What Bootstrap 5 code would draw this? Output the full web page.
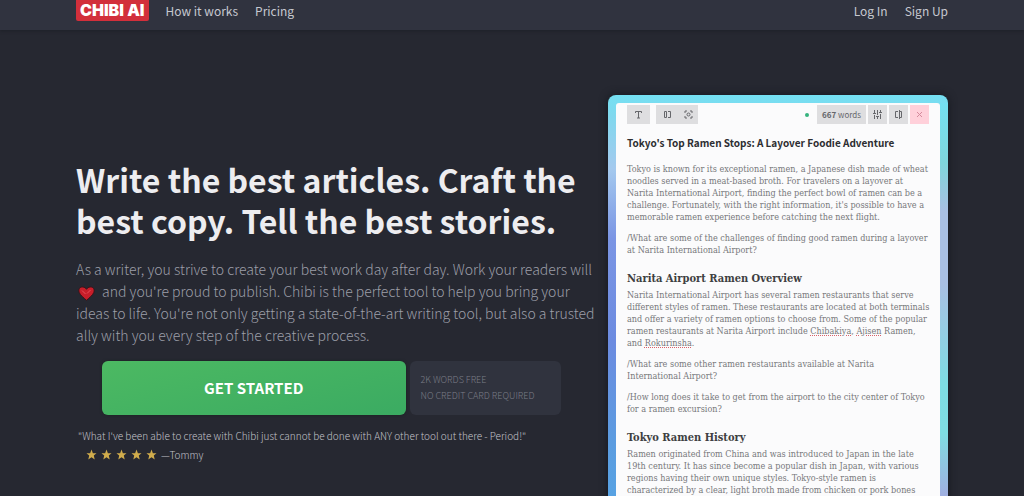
<!DOCTYPE html>
<html lang="en">
<head>
<meta charset="utf-8">
<meta name="viewport" content="width=device-width, initial-scale=1">
<title>Chibi AI</title>
<link href="https://cdn.jsdelivr.net/npm/bootstrap@5.3.0/dist/css/bootstrap.min.css" rel="stylesheet">
<style>
body { background: #262831; color: #9c9ea8; font-family: "Noto Sans CJK JP", "Open Sans", sans-serif; }
.site-width { max-width: 872px; }
.topbar { background: #30333f; height: 30px; box-shadow: 0 1px 3px #1e2028; }
.topbar nav { gap: 17px; }
.topbar a { color: #c6c8d0; font-size: 12px; line-height: 22px; text-decoration: none; }
.topbar a.logo { background: #d22f3b; color: #fff; font: 900 16px/21px Inter, sans-serif; padding: 0 4px; border-radius: 0 0 2px 2px; }
.pitch { flex: 1 1 0; min-width: 0; padding-top: 129px; }
.pitch h1 { color: #ededf0; font-size: 32px; line-height: 41px; font-weight: 700; margin-bottom: 17px; white-space: nowrap; }
.pitch .intro { font-size: 14px; line-height: 22px; font-weight: 300; margin-bottom: 15px; white-space: nowrap; }
.heart { width: 17px; height: 15px; margin: 0 4px 0 2px; }
.offer { margin-left: 26px; margin-right: 23px; }
.cta { flex: 1 1 0; height: 54px; border: 0; border-radius: 6px; color: #fff; background: linear-gradient(165deg, #4cb962, #3bab62); font-size: 15px; font-weight: 700; box-shadow: 0 0 3px #1b2420; }
.terms { flex: 0 0 33%; background: #30333e; color: #7b7d87; border-radius: 6px; font-size: 9px; line-height: 16px; font-weight: 300; padding: 0 11px; white-space: nowrap; }
.quote { color: #c0c1c8; font-size: 10px; line-height: 19px; font-weight: 300; margin: 11px 0 0 2px; }
.stars svg { width: 11px; height: 11px; }
.demo { width: 340px; padding: 8px 8px 0; margin-top: 65px; border-radius: 8px 8px 0 0; box-shadow: 0 0 8px #15181e;
  background: linear-gradient(#74e0f2, #80d8ee 5%, #a4c9ee 18%, #7b95e4 35%, #6c8be0 60%, #5b9ce0 85%, #57a3e3); position: relative; }
.demo::after { content: ""; position: absolute; top: 8px; right: 0; bottom: 0; width: 8px; background: linear-gradient(#74e0f2, #80d6dc 15%, #a9bfe2 27%, #a9bfe2 45%, #7edce2 70%, #7fdde2 82%, #a5a8e0); }
.sheet { background: #fbfbfc; color: #77787b; height: 100%; border-radius: 3px 3px 0 0; padding: 2px 6px 0 11px; font: 9px/12px "DejaVu Serif Condensed", "DejaVu Serif", serif; white-space: nowrap; }
.tools { height: 19px; padding-right: 5px; gap: 2px; }
.tools button, .count { background: #dedee0; color: #66676b; border: 0; padding: 0; height: 19px; width: 19px; display: flex; align-items: center; justify-content: center; }
.tools button.wide { width: 23px; }
.tools svg { width: 9px; height: 9px; fill: none; stroke: currentColor; }
.tools button.close-doc { background: #ffd0da; color: #d58a9c; }
.tools .count { width: 49px; font: 8px/19px "Noto Sans CJK JP", sans-serif; gap: 2px; }
.dot { width: 4px; height: 4px; border-radius: 50%; background: #36b37e; margin-right: 6px; }
.sheet h2 { color: #2d2e31; font: 700 10px/14px "Noto Sans CJK JP", sans-serif; margin: 12px 0 13px; }
.sheet h3 { color: #3e3f42; font: 700 11px/14px "DejaVu Serif Condensed", "DejaVu Serif", serif; margin: 16px 0 3px; }
.sheet p { margin: 0 0 9px; }
.sheet u { text-decoration: underline dotted #d9626a; text-underline-offset: 1px; }
</style>
</head>
<body>
<div class="vh-100 d-flex flex-column overflow-hidden">
<header class="topbar flex-shrink-0">
  <nav class="site-width mx-auto d-flex align-items-start">
    <a class="logo" href="#">CHIBI AI</a>
    <a href="#">How it works</a>
    <a href="#">Pricing</a>
    <a class="ms-auto" href="#">Log In</a>
    <a href="#">Sign Up</a>
  </nav>
</header>
<main class="site-width w-100 mx-auto flex-grow-1 d-flex gap-4">
  <section class="pitch">
    <h1>Write the best articles. Craft the<br>best copy. Tell the best stories.</h1>
    <p class="intro">As a writer, you strive to create your best work day after day. Work your readers will<br>
      <svg class="heart" viewBox="0 0 17 15" role="img" aria-label="love"><path d="M8.500 14.300C6 12 2.500 9.500 1.200 6.500 0 3 2 1 4.500 1c2 0 3.200 1 4 2.300C9.300 2 10.500 1 12.500 1 15 1 17 3 15.800 6.500 14.500 9.500 11 12 8.500 14.300Z" fill="#c81e2a" stroke="#3b1319"/><path d="M4 4.500 7.500 8M9 7.500 12.500 4" fill="none" stroke="#e8505a"/></svg>
      and you're proud to publish. Chibi is the perfect tool to help you bring your<br>ideas to life. You're not only getting a state-of-the-art writing tool, but also a trusted<br>ally with you every step of the creative process.</p>
    <div class="offer d-flex gap-1">
      <button class="cta" type="button">GET STARTED</button>
      <div class="terms d-flex flex-column justify-content-center"><span>2K WORDS FREE</span><span>NO CREDIT CARD REQUIRED</span></div>
    </div>
    <div class="quote">"What I've been able to create with Chibi just cannot be done with ANY other tool out there - Period!"
      <div class="stars d-flex align-items-center ps-2">
        <svg viewBox="0 0 24 24" fill="#d0ac4c"><path id="star" d="m12 1 3 8h8l-6 5 2 9-7-5-7 5 2-9-6-5h8z"/></svg>
        <svg class="ms-1" viewBox="0 0 24 24" fill="#d0ac4c"><use href="#star"/></svg>
        <svg class="ms-1" viewBox="0 0 24 24" fill="#d0ac4c"><use href="#star"/></svg>
        <svg class="ms-1" viewBox="0 0 24 24" fill="#d0ac4c"><use href="#star"/></svg>
        <svg class="ms-1" viewBox="0 0 24 24" fill="#d0ac4c"><use href="#star"/></svg>
        <span class="ms-1">—Tommy</span>
      </div>
    </div>
  </section>
  <section class="demo flex-shrink-0">
    <article class="sheet">
      <div class="tools d-flex align-items-center">
        <button class="wide me-1" type="button" aria-label="Text"><svg viewBox="0 0 9 9"><path d="M1.500 3V1.500h6V3M4.500 1.500V8M3 8h3"/></svg></button>
        <div class="d-flex">
          <button class="wide" type="button" aria-label="Panel"><svg viewBox="0 0 9 9"><path d="M3.500 1.500h-2v6h2zM5 1.500h2.500v6H5"/></svg></button>
          <button type="button" aria-label="Focus"><svg viewBox="0 0 9 9"><path d="M1 3V1h2M6 1h2v2M8 6v2H6M3 8H1V6"/><circle cx="4.500" cy="4.500" r="1.500"/></svg></button>
        </div>
        <i class="dot ms-auto"></i>
        <div class="count"><b>667</b><span>words</span></div>
        <button type="button" aria-label="Settings"><svg viewBox="0 0 9 9"><path d="M1.500 0v3M1.500 5v4M4.500 0v5M4.500 7v2M7.500 0v2M7.500 4v5M0 3.500h3M3 6.500h3M6 2.500h3"/></svg></button>
        <button type="button" aria-label="Sidebar"><svg viewBox="0 0 9 9"><path d="M4 1.500H1.500v6H4M5.500 0v9M5.500 1.500h2v6h-2"/></svg></button>
        <button class="close-doc" type="button" aria-label="Close"><svg viewBox="0 0 9 9"><path d="m2 2 5 5M7 2 2 7"/></svg></button>
      </div>
      <h2>Tokyo's Top Ramen Stops: A Layover Foodie Adventure</h2>
      <p>Tokyo is known for its exceptional ramen, a Japanese dish made of wheat<br>noodles served in a meat-based broth. For travelers on a layover at<br>Narita International Airport, finding the perfect bowl of ramen can be a<br>challenge. Fortunately, with the right information, it's possible to have a<br>memorable ramen experience before catching the next flight.</p>
      <p>/What are some of the challenges of finding good ramen during a layover<br>at Narita International Airport?</p>
      <h3>Narita Airport Ramen Overview</h3>
      <p>Narita International Airport has several ramen restaurants that serve<br>different styles of ramen. These restaurants are located at both terminals<br>and offer a variety of ramen options to choose from. Some of the popular<br>ramen restaurants at Narita Airport include <u>Chibakiya</u>, <u>Ajisen</u> Ramen,<br>and <u>Rokurinsha</u>.</p>
      <p>/What are some other ramen restaurants available at Narita<br>International Airport?</p>
      <p>/How long does it take to get from the airport to the city center of Tokyo<br>for a ramen excursion?</p>
      <h3>Tokyo Ramen History</h3>
      <p>Ramen originated from China and was introduced to Japan in the late<br>19th century. It has since become a popular dish in Japan, with various<br>regions having their own unique styles. Tokyo-style ramen is<br>characterized by a clear, light broth made from chicken or pork bones</p>
    </article>
  </section>
</main>
</div>
<script src="https://cdn.jsdelivr.net/npm/bootstrap@5.3.0/dist/js/bootstrap.bundle.min.js"></script>
</body>
</html>
